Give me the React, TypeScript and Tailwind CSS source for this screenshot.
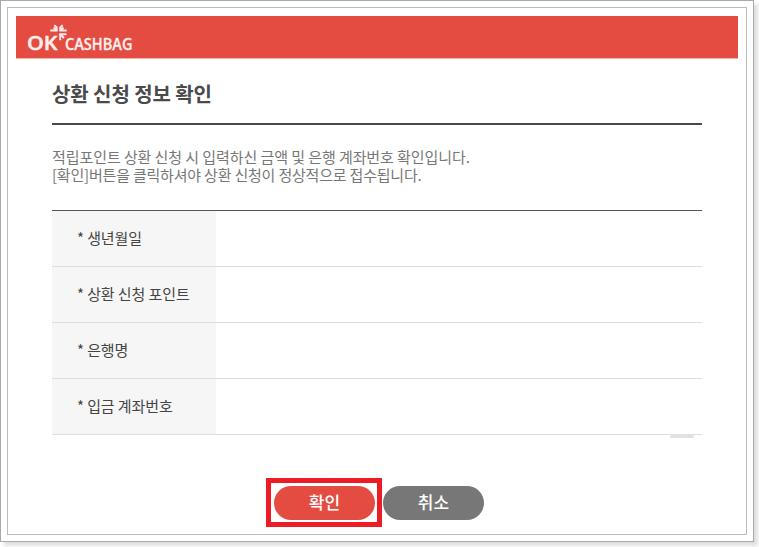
import React from 'react';

const fields = ['생년월일', '상환 신청 포인트', '은행명', '입금 계좌번호'];

const Logo: React.FC = () => (
  <svg width="108" height="34" viewBox="0 0 108 34" fill="#fdeeec" role="img" aria-label="OK Cashbag">
    <text x="0" y="26" fontSize="20.5" fontWeight="600" stroke="#fdeeec" strokeWidth="0.5" textLength="30.5" lengthAdjust="spacingAndGlyphs" fontFamily="'Open Sans', sans-serif">OK</text>
    <text x="38" y="26" fontSize="15.5" fontWeight="600" stroke="#fdeeec" strokeWidth="0.3" textLength="67.5" lengthAdjust="spacingAndGlyphs" fontFamily="'Open Sans', sans-serif">CASHBAG</text>
    {/* Clover mark */}
    <path
      d="M27.3 1.2 L29.7 3.4 L29.7 6.6 L23.3 6.6 M26.6 3.6 L29.4 6.4 M35.7 1.2 L33.3 3.4 L33.3 6.6 L39.7 6.6 M36.4 3.6 L33.6 6.4 M39.5 10.3 L33.2 10.3 L33.2 16.2 M33.6 10.6 L37 14"
      fill="none"
      stroke="#fdeeec"
      strokeWidth="2"
    />
  </svg>
);

const App: React.FC = () => {
  return (
    <div className="h-[547px] w-[759px] overflow-hidden bg-white font-['Noto_Sans_CJK_KR','Noto_Sans',sans-serif]">
      <div className="h-[542px] w-[754px] border border-[#a9a9a9] bg-white p-1.5 shadow-[4px_4px_4px_#dedede]">
        <div className="h-[528px] border border-[#bcbcbc] p-2">
          <header className="h-[43px] border-b border-[#f3b3ad] bg-[#e54c41] pt-2 pl-[11px]">
            <Logo />
          </header>

          <main className="px-9">
            <h1 className="h-[66px] border-b-2 border-[#4a4a4a] pt-5 text-[20px] leading-[30px] font-bold tracking-[-0.08px] whitespace-nowrap text-[#4a4a4a]">
              상환 신청 정보 확인
            </h1>
            <div className="h-[85px] pt-[23px] text-[15px] leading-[18px] whitespace-nowrap text-[#777]">
              <p className="tracking-[-0.08px]">적립포인트 상환 신청 시 입력하신 금액 및 은행 계좌번호 확인입니다.</p>
              <p className="tracking-[-0.2px]">[확인]버튼을 클릭하셔야 상환 신청이 정상적으로 접수됩니다.</p>
            </div>

            <div className="relative border-t border-[#555]">
              {fields.map((label) => (
                <div key={label} className="flex h-14 border-b border-[#dedede]">
                  <div className="flex w-[164px] items-center bg-[#f6f6f6] pb-px pl-[25px] text-[15px] tracking-[-0.1px] whitespace-nowrap text-[#444]">
                    * {label}
                  </div>
                </div>
              ))}
              <div className="absolute right-2 -bottom-[3px] h-1 w-6 rounded-t-full bg-[#e2e2e2]" />
            </div>

            <div className="mt-[43px] ml-[214px] flex gap-px">
              <div className="h-[49px] w-[116px] border-5 border-[#ed1c24] p-[3px] pt-[2.5px]">
                <button className="block h-[34px] w-[101px] rounded-full bg-[#e54c41] text-[17px] leading-[32px] font-medium text-white">
                  <span className="block h-[34px]">확인</span>
                </button>
              </div>
              <button className="mt-[7.5px] h-[34px] w-[101px] rounded-full bg-[#777] text-[17px] leading-[32px] font-medium text-white">
                <span className="block h-[34px]">취소</span>
              </button>
            </div>
          </main>
        </div>
      </div>
    </div>
  );
};

export default App;
